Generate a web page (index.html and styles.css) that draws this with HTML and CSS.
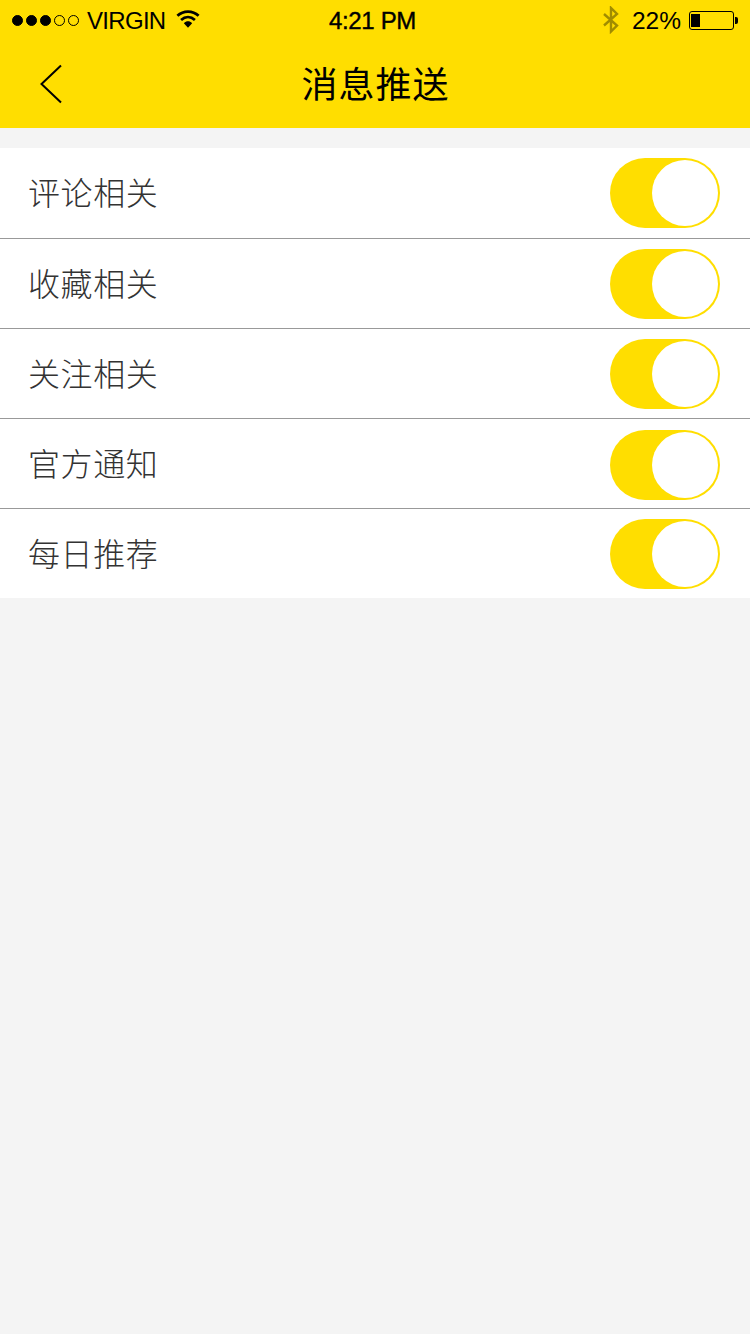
FILE: index.html
```html
<!DOCTYPE html>
<html lang="zh">
<head>
<meta charset="utf-8">
<title>消息推送</title>
<link rel="stylesheet" href="styles.css">
</head>
<body>
<header class="header">
  <div class="status">
    <div class="status-left">
      <div class="signal">
        <i class="dot on"></i><i class="dot on"></i><i class="dot on"></i><i class="dot"></i><i class="dot"></i>
      </div>
      <span class="carrier">VIRGIN</span>
      <svg class="wifi" width="26" height="22" viewBox="0 0 26 22">
        <path d="M1.500 7.500C8 1.500 18 1.500 24.500 7.500" fill="none" stroke="#000" stroke-width="3"/>
        <path d="M5.500 12C10 8 16 8 20.500 12" fill="none" stroke="#000" stroke-width="3"/>
        <path d="M8.500 15.500C11.500 12.800 14.500 12.800 17.500 15.500L13 20.500Z" fill="#000"/>
      </svg>
    </div>
    <div class="time">4:21 PM</div>
    <div class="status-right">
      <svg class="bt" width="18" height="28" viewBox="0 0 18 28">
        <path d="M2 8L15 19.500L9 25.500V2L15 8L2 19.500" fill="none" stroke="#a08c00" stroke-width="2.400"/>
      </svg>
      <span class="percent">22%</span>
      <div class="battery">
        <div class="battery-body"><div class="battery-fill"></div></div>
        <div class="battery-tip"></div>
      </div>
    </div>
  </div>
  <nav class="nav">
    <svg class="back" width="24" height="40" viewBox="0 0 24 40">
      <path d="M22 1.500L2.500 20L22 38.500" fill="none" stroke="#000" stroke-width="2"/>
    </svg>
    <h1 class="title">消息推送</h1>
    <div class="nav-spacer"></div>
  </nav>
</header>
<main class="list">
  <div class="row row-first"><span class="label">评论相关</span><div class="toggle"><div class="knob"></div></div></div>
  <div class="row"><span class="label">收藏相关</span><div class="toggle"><div class="knob"></div></div></div>
  <div class="row"><span class="label">关注相关</span><div class="toggle"><div class="knob"></div></div></div>
  <div class="row row-low"><span class="label">官方通知</span><div class="toggle"><div class="knob"></div></div></div>
  <div class="row row-last"><span class="label">每日推荐</span><div class="toggle"><div class="knob"></div></div></div>
</main>
</body>
</html>
```
FILE: styles.css
```css
* { box-sizing: border-box; }
html, body { margin: 0; padding: 0; }
body {
  width: 750px;
  height: 1334px;
  overflow: hidden;
  background: #f4f4f4;
  font-family: "Liberation Sans", "Noto Sans CJK SC", sans-serif;
}
.header { height: 128px; background: #ffde00; color: #000; }
.status { height: 40px; display: flex; align-items: center; padding: 0 12px; }
.status-left, .status-right { flex: 1; display: flex; align-items: center; }
.status-right { justify-content: flex-end; }
.signal { display: flex; gap: 3px; }
.dot { width: 11px; height: 11px; border-radius: 50%; border: 1px solid #000; display: block; }
.dot.on { background: #000; }
.carrier { font-size: 24px; letter-spacing: -0.7px; margin-left: 8px; line-height: 40px; padding-top: 2px; }
.wifi { margin-left: 11px; margin-top: -3px; width: 24px; }
.time { font-size: 24px; letter-spacing: -0.35px; line-height: 40px; padding-top: 2px; -webkit-text-stroke: 0.4px #000; width: 88px; text-align: center; white-space: nowrap; margin-right: 5px; }
.bt { margin-right: 12px; }
.percent { font-size: 24.500px; line-height: 40px; padding-top: 2px; margin-right: 8px; }
.battery { display: flex; align-items: center; }
.battery-body { width: 45px; height: 19px; border: 1px solid #000; border-radius: 3px; padding: 2px 1px; }
.battery-fill { width: 9px; height: 100%; background: #000; }
.battery-tip { width: 3px; height: 7px; margin-left: 1px; background: #000; border-radius: 0 2px 2px 0; }
.nav { height: 88px; display: grid; grid-template-columns: 150px 1fr 150px; align-items: center; padding-bottom: 1px; }
.back { margin-left: 39px; }
.title { margin: 0 0 4px; padding-left: 1px; font-size: 36px; font-weight: 400; letter-spacing: 1px; text-align: center; line-height: 80px; font-family: "Noto Sans CJK SC", sans-serif; }
.list { margin-top: 20px; background: #fff; }
.row { height: 90px; display: flex; justify-content: space-between; align-items: flex-start; padding: 10px 30px 0 28px; border-bottom: 1px solid #999; }
.row-first { height: 91px; }
.row-low { padding-top: 11px; }
.row-low .label { line-height: 64px; }
.row-last { border-bottom: 0; height: 89px; }
.label { font-family: "Noto Sans CJK SC", sans-serif; font-size: 32px; font-weight: 300; letter-spacing: 0.6px; line-height: 66px; color: #333; }
.toggle { width: 110px; height: 70px; border-radius: 35px; background: #ffde00; position: relative; }
.knob { position: absolute; right: 2px; top: 2px; width: 66px; height: 66px; border-radius: 50%; background: #fff; }
```
